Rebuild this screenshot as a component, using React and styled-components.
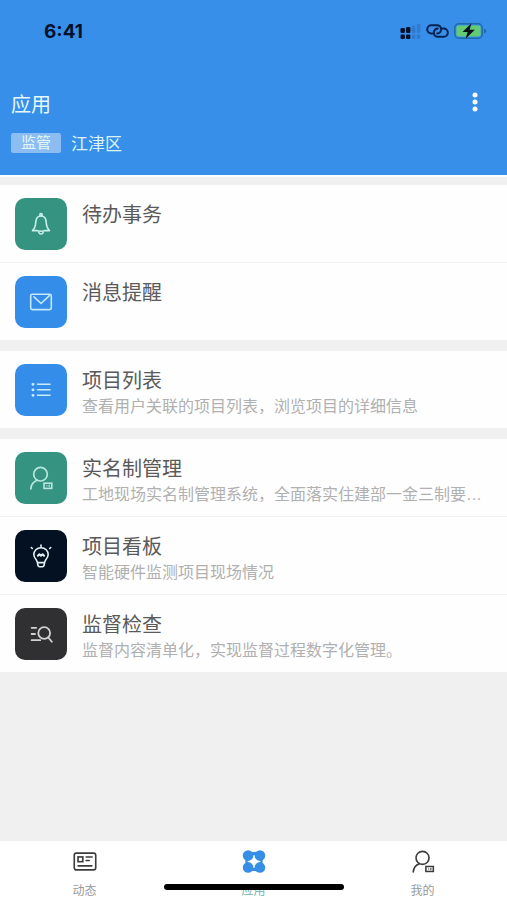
import styled, { createGlobalStyle } from "styled-components";

const GlobalStyle = createGlobalStyle`
  * {
    box-sizing: border-box;
  }
  body {
    margin: 0;
    background: #f0f0f0;
    font-family: "Liberation Sans", "Noto Sans CJK SC", sans-serif;
  }
`;

const Page = styled.div`
  min-height: 100vh;
  display: flex;
  flex-direction: column;
`;

const Header = styled.header`
  background: #388fea;
  padding-bottom: 18px;
`;

const StatusBar = styled.div`
  height: 62px;
  padding: 0 20px 0 44px;
  display: flex;
  align-items: center;
  justify-content: space-between;
`;

const Time = styled.span`
  font-family: Inter, sans-serif;
  font-size: 19px;
  font-weight: 700;
  color: #06122c;
`;

const StatusIcons = styled.div`
  display: flex;
  align-items: center;
  gap: 5px;
`;

const TitleBar = styled.div`
  padding: 25px 20px 0 11px;
  display: flex;
  align-items: flex-start;
  justify-content: space-between;
`;

const Title = styled.h1`
  margin: 0;
  padding-top: 3px;
  font-size: 20px;
  line-height: 30px;
  font-weight: 400;
  color: #e4f8f6;
`;

const MenuButton = styled.button`
  border: none;
  background: none;
  padding: 0;
  width: 24px;
  height: 30px;
  display: flex;
  align-items: center;
  justify-content: center;
  cursor: pointer;
`;

const Location = styled.div`
  padding: 13px 11px 0;
  display: flex;
  align-items: flex-start;
  gap: 10px;
`;

const Tag = styled.span`
  width: 50px;
  border-radius: 2px;
  background: #8bbcf2;
  color: #e4f8f6;
  font-size: 15px;
  line-height: 20px;
  text-align: center;
`;

const District = styled.span`
  font-size: 17px;
  line-height: 24px;
  color: #d8f5f4;
`;

const Main = styled.main`
  flex: 1;
  border-top: 2px solid #fbfdfe;
  padding: 8px 0 20px;
  display: flex;
  flex-direction: column;
  gap: 11px;
`;

const Group = styled.ul`
  margin: 0;
  padding: 0;
  list-style: none;
  background: #fefefe;
`;

const Item = styled.li`
  & + & {
    border-top: 1px solid #f1f1f1;
  }
`;

const Row = styled.a`
  display: flex;
  gap: 15px;
  min-height: 77px;
  padding: 13px 15px 0;
  text-decoration: none;
`;

const IconBox = styled.span`
  flex: none;
  width: 52px;
  height: 52px;
  border-radius: 10px;
  background: ${(props) => props.$color};
  display: flex;
  align-items: center;
  justify-content: center;
`;

const RowText = styled.span`
  flex: 1;
  min-width: 0;
  padding-top: 2px;
  display: flex;
  flex-direction: column;
`;

const RowTitle = styled.span`
  font-size: 20px;
  line-height: 30px;
  color: #5a5a5a;
`;

const RowDesc = styled.span`
  font-size: 16px;
  line-height: 22px;
  color: #b0b0b0;
  white-space: nowrap;
  overflow: hidden;
  text-overflow: ellipsis;
`;

const TabBar = styled.nav`
  position: relative;
  height: 59px;
  background: #fff;
  display: flex;
`;

const Tab = styled.a`
  flex: 1;
  padding-top: 9px;
  display: flex;
  flex-direction: column;
  align-items: center;
  gap: 9px;
  font-size: 12px;
  line-height: 18px;
  text-decoration: none;
  color: ${(props) => (props.$active ? "#6fb5ac" : "#999")};
`;

const HomeIndicator = styled.div`
  position: absolute;
  left: 50%;
  bottom: 10px;
  width: 180px;
  height: 6px;
  border-radius: 3px;
  background: #000;
  transform: translateX(-50%);
`;

const SignalIcon = () => (
  <svg width="21" height="18" viewBox="0 0 21 18">
    <g fill="#06122c">
      <rect x="0.5" y="6" width="4.4" height="5" rx="1.2" />
      <rect x="6" y="5" width="4.4" height="6" rx="1.2" />
      <rect x="0.5" y="12.6" width="4.4" height="4.4" rx="1.2" />
      <rect x="6" y="12.6" width="4.4" height="4.4" rx="1.2" />
    </g>
    <g fill="#2f7ccf">
      <rect x="11.8" y="3.5" width="3.6" height="7.5" rx="1" />
      <rect x="16.8" y="2" width="3.6" height="9" rx="1" />
      <rect x="11.8" y="12.6" width="3.6" height="4.4" rx="1" />
      <rect x="16.8" y="12.6" width="3.6" height="4.4" rx="1" />
    </g>
  </svg>
);

const LinkIcon = () => (
  <svg width="23" height="14" viewBox="0 0 23 14" fill="none" stroke="#082350" strokeWidth="2" strokeLinecap="round">
    <path d="M6.2 9.4H5.4C3 9.4 1.2 7.7 1.2 5.3C1.2 2.9 3 1.2 5.4 1.2H10.8C13.3 1.2 15.2 2.9 15.2 5.3C15.2 7.7 13.4 9.4 11.2 9.4" />
    <path d="M16.8 4.6H17.6C20 4.6 21.8 6.3 21.8 8.7C21.8 11.1 20 12.8 17.6 12.8H12.2C9.7 12.8 7.8 11.1 7.8 8.7C7.8 6.3 9.6 4.6 11.8 4.6" />
  </svg>
);

const BatteryIcon = () => (
  <svg width="33" height="18" viewBox="0 0 33 18">
    <rect x="0.8" y="1.8" width="27.4" height="14.4" rx="4" fill="none" stroke="#1f6aa8" strokeWidth="1.4" />
    <rect x="2.4" y="3.4" width="24.2" height="11.2" rx="2.4" fill="#62cb74" />
    <path d="M30 6.5C31.5 7 32.3 8 32.3 9C32.3 10 31.5 11 30 11.5Z" fill="#1f6aa8" />
    <path d="M17.5 1.2L8.5 10H13.6L11.6 16.8L20.8 7.8H15.6Z" fill="#04101c" />
  </svg>
);

const MoreIcon = () => (
  <svg width="6" height="20" viewBox="0 0 6 20" fill="#fff">
    <circle cx="3" cy="3" r="2.5" />
    <circle cx="3" cy="10" r="2.5" />
    <circle cx="3" cy="17" r="2.5" />
  </svg>
);

const BellIcon = () => (
  <svg width="24" height="24" viewBox="0 0 24 24" fill="none" stroke="#c9f0e9" strokeWidth="1.6" strokeLinecap="round" strokeLinejoin="round">
    <circle cx="12" cy="2.8" r="1.2" />
    <path d="M12 4C8.5 4 7 6.8 6.8 10C6.6 14 6.2 16 3.5 18.6H7.4C9 19.1 10 19.3 12 19.3C14 19.3 15 19.1 16.6 18.6H20.5C17.8 16 17.4 14 17.2 10C17 6.8 15.5 4 12 4Z" />
    <path d="M9.8 20.4C10.4 22.6 13.6 22.6 14.2 20.4" />
  </svg>
);

const MailIcon = () => (
  <svg width="24" height="24" viewBox="0 0 24 24" fill="none" stroke="#c4e8fa" strokeWidth="1.6" strokeLinecap="round" strokeLinejoin="round">
    <rect x="1.7" y="4.2" width="20.6" height="15.4" rx="1.6" />
    <path d="M5 6.8L12 13.5L20.4 5.6" />
  </svg>
);

const ListIcon = () => (
  <svg width="24" height="24" viewBox="0 0 24 24" fill="none" stroke="#c9ecfb" strokeWidth="1.6" strokeLinecap="round">
    <path d="M8.5 6.3H21M8.5 11.8H21M8.5 17.3H21" />
    <path d="M3.9 6.3H4.1M3.9 11.8H4.1M3.9 17.3H4.1" strokeWidth="2.8" />
  </svg>
);

const PersonIcon = ({ color }) => (
  <svg width="24" height="24" viewBox="0 0 24 24" fill="none" stroke={color} strokeWidth="1.7" strokeLinecap="round">
    <circle cx="11.5" cy="8.2" r="6.8" />
    <path d="M8.2 14.3C4.6 15.6 2.2 18.7 1.8 22.8" />
    <rect x="15" y="17.2" width="7.8" height="5.2" strokeWidth="1.6" />
    <path d="M17.8 19.8H18M20.2 19.2V20.4" strokeWidth="1.2" />
  </svg>
);

const BulbIcon = () => (
  <svg width="24" height="24" viewBox="0 0 24 24" fill="none" stroke="#e3f2f7" strokeWidth="1.6" strokeLinecap="round" strokeLinejoin="round">
    <path d="M12 3.8C7.8 3.8 4.8 6.8 4.8 10.6C4.8 13.2 6.2 14.7 7.6 16.4C8.3 17.3 8.5 18.5 8.7 20.2C8.9 21.8 9.5 22.8 10.6 22.8H13.4C14.5 22.8 15.1 21.8 15.3 20.2C15.5 18.5 15.7 17.3 16.4 16.4C17.800 14.7 19.2 13.2 19.2 10.6C19.2 6.8 16.2 3.8 12 3.8Z" />
    <path d="M8.9 11.8L10.4 10.3L12 11.8L13.6 10.3L15.1 11.8" strokeWidth="2" />
    <path d="M9.2 18.6H14.8" />
    <path d="M12 1V2.4M2.3 3.5L3.3 4.5M21.7 3.5L20.7 4.5" />
  </svg>
);

const SearchListIcon = () => (
  <svg width="24" height="24" viewBox="0 0 24 24" fill="none" stroke="#d2d2d2" strokeWidth="1.8" strokeLinecap="round">
    <circle cx="15.2" cy="11" r="5.9" />
    <path d="M19.3 15.5L22.8 19.8" />
    <path d="M2.6 5.8H7.2M2.6 12H6M2.6 18.2H11.2" />
  </svg>
);

const NewsIcon = () => (
  <svg width="26" height="24" viewBox="0 0 26 24" fill="none" stroke="#3c3c3c" strokeWidth="1.7" strokeLinecap="round">
    <rect x="1.8" y="3.2" width="22.4" height="17.6" rx="2.2" />
    <rect x="5.7" y="7.2" width="5" height="5" />
    <path d="M14.2 7.3H20.4M14.2 11H17.4M5.8 16.5H20.2" />
  </svg>
);

const AppsIcon = () => (
  <svg width="24" height="24" viewBox="0 0 24 24">
    <path d="M3 2H21V22H3Z" fill="#368ee6" />
    <g fill="#368ee6">
      <circle cx="5.8" cy="5.8" r="5.5" />
      <circle cx="18.2" cy="5.8" r="5.5" />
      <circle cx="5.8" cy="18.2" r="5.5" />
      <circle cx="18.2" cy="18.2" r="5.5" />
    </g>
    <path d="M12 5.5C12.7 9.5 14.5 11.3 18.5 12C14.5 12.7 12.7 14.5 12 18.5C11.3 14.5 9.5 12.7 5.5 12C9.5 11.3 11.3 9.5 12 5.5Z" fill="#fff" stroke="#fff" strokeWidth="0.8" />
  </svg>
);

const groups = [
  [
    { title: "待办事务", color: "#359481", icon: <BellIcon /> },
    { title: "消息提醒", color: "#358dea", icon: <MailIcon /> },
  ],
  [
    {
      title: "项目列表",
      desc: "查看用户关联的项目列表，浏览项目的详细信息",
      color: "#358dea",
      icon: <ListIcon />,
    },
  ],
  [
    {
      title: "实名制管理",
      desc: "工地现场实名制管理系统，全面落实住建部一金三制要求。",
      color: "#359481",
      icon: <PersonIcon color="#b9e6de" />,
    },
    {
      title: "项目看板",
      desc: "智能硬件监测项目现场情况",
      color: "#031122",
      icon: <BulbIcon />,
    },
    {
      title: "监督检查",
      desc: "监督内容清单化，实现监督过程数字化管理。",
      color: "#303032",
      icon: <SearchListIcon />,
    },
  ],
];

const tabs = [
  { label: "动态", icon: <NewsIcon /> },
  { label: "应用", icon: <AppsIcon />, active: true },
  { label: "我的", icon: <PersonIcon color="#3c3c3c" /> },
];

const App = () => {
  return (
    <Page>
      <GlobalStyle />
      <Header>
        <StatusBar>
          <Time>6:41</Time>
          <StatusIcons>
            <SignalIcon />
            <LinkIcon />
            <BatteryIcon />
          </StatusIcons>
        </StatusBar>
        <TitleBar>
          <Title>应用</Title>
          <MenuButton aria-label="更多">
            <MoreIcon />
          </MenuButton>
        </TitleBar>
        <Location>
          <Tag>监管</Tag>
          <District>江津区</District>
        </Location>
      </Header>
      <Main>
        {groups.map((items) => (
          <Group key={items[0].title}>
            {items.map((item) => (
              <Item key={item.title}>
                <Row href="#">
                  <IconBox $color={item.color}>{item.icon}</IconBox>
                  <RowText>
                    <RowTitle>{item.title}</RowTitle>
                    {item.desc && <RowDesc>{item.desc}</RowDesc>}
                  </RowText>
                </Row>
              </Item>
            ))}
          </Group>
        ))}
      </Main>
      <TabBar>
        {tabs.map((tab) => (
          <Tab key={tab.label} href="#" $active={tab.active}>
            {tab.icon}
            {tab.label}
          </Tab>
        ))}
        <HomeIndicator />
      </TabBar>
    </Page>
  );
};

export default App;
